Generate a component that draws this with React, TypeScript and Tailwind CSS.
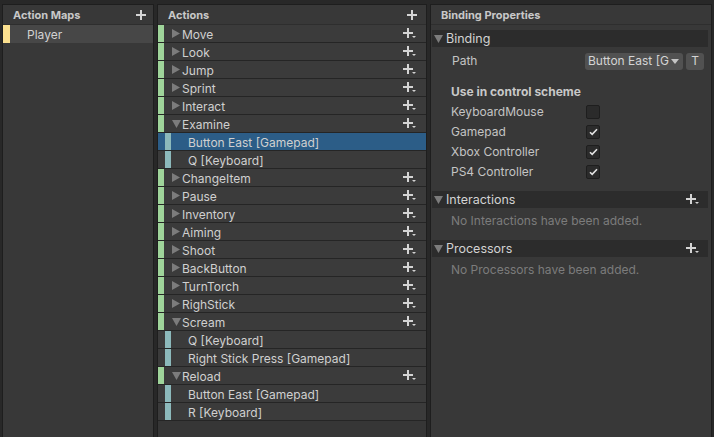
import React from 'react';

type Row =
  | { kind: 'action'; name: string; open?: boolean }
  | { kind: 'binding'; name: string; selected?: boolean };

const rows: Row[] = [
  { kind: 'action', name: 'Move' },
  { kind: 'action', name: 'Look' },
  { kind: 'action', name: 'Jump' },
  { kind: 'action', name: 'Sprint' },
  { kind: 'action', name: 'Interact' },
  { kind: 'action', name: 'Examine', open: true },
  { kind: 'binding', name: 'Button East [Gamepad]', selected: true },
  { kind: 'binding', name: 'Q [Keyboard]' },
  { kind: 'action', name: 'ChangeItem' },
  { kind: 'action', name: 'Pause' },
  { kind: 'action', name: 'Inventory' },
  { kind: 'action', name: 'Aiming' },
  { kind: 'action', name: 'Shoot' },
  { kind: 'action', name: 'BackButton' },
  { kind: 'action', name: 'TurnTorch' },
  { kind: 'action', name: 'RighStick' },
  { kind: 'action', name: 'Scream', open: true },
  { kind: 'binding', name: 'Q [Keyboard]' },
  { kind: 'binding', name: 'Right Stick Press [Gamepad]' },
  { kind: 'action', name: 'Reload', open: true },
  { kind: 'binding', name: 'Button East [Gamepad]' },
  { kind: 'binding', name: 'R [Keyboard]' },
];

const schemes = [
  { name: 'KeyboardMouse', on: false },
  { name: 'Gamepad', on: true },
  { name: 'Xbox Controller', on: true },
  { name: 'PS4 Controller', on: true },
];

// plus sign used in panel headers
function Plus() {
  return (
    <svg width="10" height="10" viewBox="0 0 10 10">
      <path d="M4 0h2v4h4v2H6v4H4V6H0V4h4z" fill="#d4d4d4" />
    </svg>
  );
}

// plus with the little dropdown arrow
function PlusDrop() {
  return (
    <svg width="13" height="11" viewBox="0 0 13 11">
      <path d="M4 0h2v4h4v2H6v4H4V6H0V4h4z" fill="#d4d4d4" />
      <path d="M9 8h4l-2 2z" fill="#d4d4d4" />
    </svg>
  );
}

function Fold({ open }: { open?: boolean }) {
  return open ? (
    <svg width="9" height="8" viewBox="0 0 9 8">
      <path d="M0 0h9L4.5 8z" fill="#7c7c7c" />
    </svg>
  ) : (
    <svg width="8" height="9" viewBox="0 0 8 9">
      <path d="M0 0v9l8-4.5z" fill="#7c7c7c" />
    </svg>
  );
}

function Section({ title }: { title: string }) {
  return (
    <div className="h-[17px] bg-[#2c2c2c] flex items-center pl-[2px] pr-[9px]">
      <Fold open />
      <span className="ml-[3px] mt-[1px] text-[12.5px] text-[#d2d2d2] flex-1">{title}</span>
      <PlusDrop />
    </div>
  );
}

export default function App() {
  return (
    <div
      className="w-[714px] h-[437px] bg-[#282828] flex gap-[3px] px-[2px] pt-[4px] overflow-hidden text-[12px]"
      style={{ fontFamily: 'Inter, "Noto Sans", sans-serif' }}
    >
      {/* Action Maps */}
      <div className="w-[152px] h-[440px] bg-[#383838] border border-[#1e1e1e] flex flex-col">
        <div className="h-[20px] flex items-center justify-between pl-[10px] pr-[7px] border-b border-[#2e2e2e]">
          <span className="mt-[2px] text-[11px] font-bold text-[#c8c8c8]">Action Maps</span>
          <Plus />
        </div>
        <div className="h-[18px] bg-[#474747] flex items-center">
          <div className="w-[7px] h-full bg-[#fbe08f]" />
          <span className="ml-[17px] mt-[2px] text-[#d2d2d2]">Player</span>
        </div>
      </div>

      {/* Actions */}
      <div className="w-[270px] h-[440px] bg-[#363636] border border-[#1e1e1e] flex flex-col">
        <div className="h-[20px] flex items-center justify-between pl-[10px] pr-[9px] bg-[#383838] border-b border-[#2e2e2e]">
          <span className="mt-[2px] text-[11px] font-bold text-[#c8c8c8]">Actions</span>
          <Plus />
        </div>
        {rows.map((r, i) =>
          r.kind === 'action' ? (
            <div key={i} className="h-[18px] bg-[#3b3b3b] border-b border-[#252525] flex items-center">
              <div className="w-[6px] h-full bg-[#9fd49a]" />
              <div className="ml-[7px] w-[10px] flex justify-center">
                <Fold open={r.open} />
              </div>
              <span className="ml-[1px] mt-[2px] flex-1 text-[#d0d0d0]">{r.name}</span>
              <div className="mr-[10px]">
                <PlusDrop />
              </div>
            </div>
          ) : (
            <div
              key={i}
              className={
                'h-[18px] border-b border-[#252525] flex items-center ' +
                (r.selected ? 'bg-[#2c5d87]' : 'bg-[#3b3b3b]')
              }
            >
              <div className="ml-[7px] w-[6px] h-full bg-[#8cb9bb]" />
              <span className="ml-[17px] mt-[2px] text-[#d0d0d0]">{r.name}</span>
            </div>
          )
        )}
      </div>

      {/* Binding Properties */}
      <div className="flex-1 h-[440px] bg-[#383838] border border-[#1e1e1e] flex flex-col">
        <div className="h-[20px] flex items-center pl-[10px] border-b border-[#2e2e2e]">
          <span className="mt-[2px] text-[11px] font-bold text-[#c8c8c8]">Binding Properties</span>
        </div>
        <div className="pl-[1px] pr-[3px] pt-[5px] flex flex-col">
          <div className="h-[17px] bg-[#2c2c2c] flex items-center pl-[2px]">
            <Fold open />
            <span className="ml-[3px] mt-[1px] text-[12.5px] text-[#d2d2d2]">Binding</span>
          </div>
          <div className="h-[28px] flex items-center pl-[20px] pr-[4px]">
            <span className="flex-1 text-[#c4c4c4]">Path</span>
            <div className="w-[98px] h-[17px] bg-[#515151] rounded-[3px] flex items-center pl-[3px] pr-[4px] overflow-hidden">
              <span className="flex-1 whitespace-nowrap overflow-hidden text-[#d4d4d4]">Button East [G</span>
              <svg width="8" height="5" viewBox="0 0 8 5">
                <path d="M0 0h8L4 5z" fill="#c4c4c4" />
              </svg>
            </div>
            <div className="ml-[3px] w-[18px] h-[17px] bg-[#515151] rounded-[3px] flex items-center justify-center text-[#d4d4d4]">
              T
            </div>
          </div>
          <div className="h-[20px] mt-[7px] flex items-center pl-[19px] font-bold text-[#c8c8c8]">Use in control scheme</div>
          {schemes.map((s) => (
            <div key={s.name} className="h-[20px] flex items-center pl-[19px]">
              <span className="w-[135px] text-[#c4c4c4]">{s.name}</span>
              <div className="w-[14px] h-[14px] rounded-[2px] bg-[#2b2b2b] border border-[#1e1e1e] flex items-center justify-center">
                {s.on && (
                  <svg width="9" height="8" viewBox="0 0 9 8">
                    <path d="M1 4.2l2.2 2.2L8 1.2" stroke="#e4e4e4" strokeWidth="1.6" fill="none" />
                  </svg>
                )}
              </div>
            </div>
          ))}
          <div className="mt-[9px]">
            <Section title="Interactions" />
          </div>
          <div className="h-[26px] flex items-center pl-[19px] text-[#7c7c7c]">No Interactions have been added.</div>
          <div className="mt-[6px]">
            <Section title="Processors" />
          </div>
          <div className="h-[26px] flex items-center pl-[19px] text-[#7c7c7c]">No Processors have been added.</div>
        </div>
      </div>
    </div>
  );
}
